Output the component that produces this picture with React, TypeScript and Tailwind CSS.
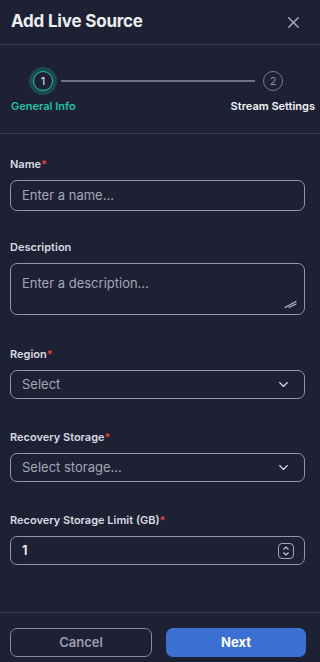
import { ChevronDown, X } from "lucide-react"

function Label({ text, required }: { text: string; required?: boolean }) {
  return (
    <label className="block text-[11px] font-semibold leading-[16px] text-[#d9dbe2] mb-[8px]">
      {text}
      {required && <span className="text-[#e0443e]">*</span>}
    </label>
  )
}

function SelectBox({ placeholder }: { placeholder: string }) {
  return (
    <div className="flex h-[29px] items-center justify-between rounded-[7px] border border-[#9296a8] pl-[11px] pr-[13px]">
      <span className="text-[13px] text-[#a3a7b6]">{placeholder}</span>
      <ChevronDown size={15} strokeWidth={2.2} className="text-[#e8e9ee]" />
    </div>
  )
}

export default function App() {
  return (
    <div
      className="flex h-[662px] w-[320px] flex-col overflow-hidden bg-[#1e2034] text-white"
      style={{ fontFamily: "Inter, 'Noto Sans', sans-serif" }}
    >
      <div className="flex h-[45px] shrink-0 items-center justify-between border-b border-[#3a3d52] pl-[11px] pr-[17px]">
        <h1 className="text-[17px] font-bold tracking-[-0.2px] text-[#eceef2]">Add Live Source</h1>
        <X size={19} strokeWidth={1.8} className="text-[#a9acb9]" />
      </div>

      <div className="h-[89px] shrink-0 border-b border-[#3a3d52] pt-[22px]">
        <div className="flex items-center pl-[29px] pr-[37px]">
          <div className="flex h-[28px] w-[28px] items-center justify-center rounded-full bg-[#1c4a4c]">
            <div className="flex h-[20px] w-[20px] items-center justify-center rounded-full border-[1.5px] border-[#23c4a0] bg-[#1e2034] text-[11px] text-[#d6f5ee]">
              1
            </div>
          </div>
          <div className="ml-[4px] mr-[8px] h-[2px] flex-1 bg-[#6e7284]" />
          <div className="flex h-[20px] w-[20px] items-center justify-center rounded-full border border-[#787c8e] text-[11px] text-[#8d91a2]">
            2
          </div>
        </div>
        <div className="mt-[3px] flex justify-between pl-[11px] pr-[5px] text-[11px] font-semibold leading-[16px]">
          <span className="text-[#23c4a0]">General Info</span>
          <span className="text-[#f2f3f6]">Stream Settings</span>
        </div>
      </div>

      <div className="flex flex-1 flex-col pl-[10px] pr-[15px] pt-[22px]">
        <div>
          <Label text="Name" required />
          <div className="flex h-[31px] items-center rounded-[7px] border border-[#9296a8] px-[11px]">
            <span className="text-[13px] text-[#a3a7b6]">Enter a name...</span>
          </div>
        </div>

        <div className="mt-[28px]">
          <Label text="Description" />
          <div className="relative h-[52px] rounded-[7px] border border-[#9296a8] px-[11px] pt-[6px]">
            <span className="text-[13px] text-[#a3a7b6]">Enter a description...</span>
            <svg className="absolute bottom-[6px] right-[7px]" width="13" height="8" viewBox="0 0 13 8">
              <path d="M1 7.5 L12 1.5 M5 7.5 L12 4" stroke="#b9bcc8" strokeWidth="1.2" strokeLinecap="round" />
            </svg>
          </div>
        </div>

        <div className="mt-[31px]">
          <Label text="Region" required />
          <SelectBox placeholder="Select" />
        </div>

        <div className="mt-[30px]">
          <Label text="Recovery Storage" required />
          <SelectBox placeholder="Select storage..." />
        </div>

        <div className="mt-[30px]">
          <Label text="Recovery Storage Limit (GB)" required />
          <div className="flex h-[29px] items-center justify-between rounded-[7px] border border-[#9296a8] pl-[11px] pr-[10px]">
            <span className="text-[13px] font-semibold text-[#f2f3f6]">1</span>
            <div className="flex h-[16px] w-[16px] items-center justify-center rounded-[4px] border border-[#a3a7b6]">
              <svg width="8" height="12" viewBox="0 0 8 12">
                <path d="M1.5 4.5 L4 2 L6.5 4.5 M1.5 7.5 L4 10 L6.5 7.5" stroke="#c9ccd6" strokeWidth="1.1" fill="none" />
              </svg>
            </div>
          </div>
        </div>
      </div>

      <div className="flex shrink-0 gap-[14px] border-t border-[#3a3d52] pb-[5px] pl-[10px] pr-[14px] pt-[15px]">
        <button className="h-[29px] flex-1 rounded-[7px] border border-[#878b9d] text-[13px] font-semibold text-[#9a9eaf]">
          Cancel
        </button>
        <button className="h-[29px] flex-1 rounded-[7px] bg-[#3b6fd2] text-[13px] font-bold text-white">
          Next
        </button>
      </div>
    </div>
  )
}
